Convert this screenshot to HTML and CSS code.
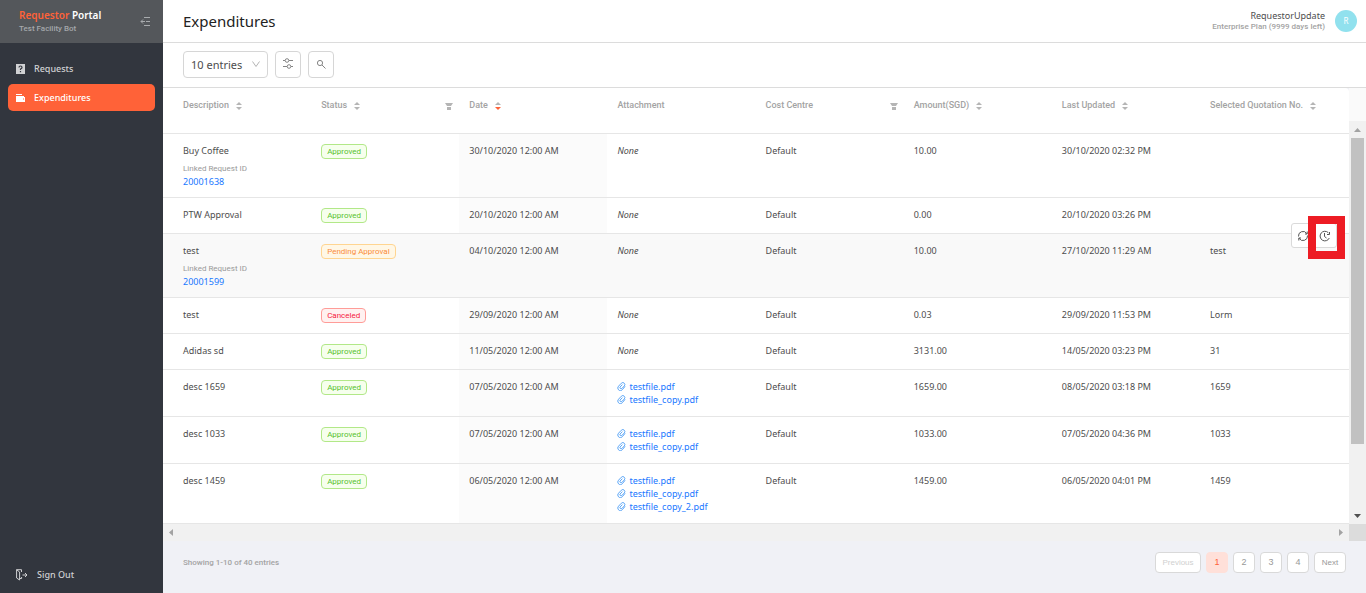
FILE: index.html
```html
<!DOCTYPE html>
<html lang="en">
<head>
<meta charset="utf-8">
<title>Expenditures</title>
<link rel="stylesheet" href="styles.css">
</head>
<body>
<svg class="defs" aria-hidden="true">
  <symbol id="sort" viewBox="0 0 6 10"><path fill="#b5b5b5" d="M3 1 6 4H0z"/><path d="M0 6h6L3 9z"/></symbol>
  <symbol id="filter" viewBox="0 0 8 8"><path d="M0 1h8L6 4H2zM2 5h4v3H2z"/></symbol>
  <symbol id="clip" viewBox="0 0 10 10"><path d="M9 4.800 6 8.500a2.800 2.800 0 0 1-4.300.200 2.900 2.900 0 0 1 0-4L4.800 1.400a2.200 2.200 0 0 1 3.300 0 2.200 2.200 0 0 1 0 3L5.400 7.200a1.300 1.300 0 0 1-2-1.600l2.600-2.700" fill="none" stroke="currentColor" stroke-width="1"/></symbol>
</svg>
<div class="app">
  <aside class="sidebar">
    <div class="brand">
      <div>
        <div class="brand-name"><span class="accent">Requestor</span> Portal</div>
        <div class="brand-sub">Test Facility Bot</div>
      </div>
      <button class="collapse" aria-label="Collapse menu">
        <svg width="10" height="10" viewBox="0 0 10 10" fill="none" stroke="currentColor"><path d="M4 .500h6M5 4.500H1M4 8.500h6M6 4.500h4M3 2.500l-2 2 2 2"/></svg>
      </button>
    </div>
    <nav class="nav">
      <a href="#" class="nav-item">
        <svg width="10" height="10" viewBox="0 0 10 10"><path d="M0 0h9v10H0z" fill="#d0d1d3"/><path d="M3 3.500Q3 2 4.500 2T6 3.500Q6 4.500 4.500 5v1M4.500 7v1.200" fill="none" stroke="#32363e" stroke-width="1.200"/></svg>
        Requests</a>
      <a href="#" class="nav-item active">
        <svg width="10" height="10" viewBox="0 0 10 10"><path fill-rule="evenodd" d="M0 1h6v1H0zM0 3h8v1h1v5H0zM7 5.500v1h1v-1z" fill="#fff"/></svg>
        Expenditures</a>
    </nav>
    <a href="#" class="signout">
      <svg width="12" height="12" viewBox="0 0 12 12" fill="none" stroke="currentColor"><path d="M5.500 3V.7H.600v8.300l3 2V3L.600.700M3.600 9.500h2V8M6.500 6H11M9 4l2 2-2 2"/></svg>
      Sign Out</a>
  </aside>
  <main class="main">
    <header class="topbar">
      <h1>Expenditures</h1>
      <div class="user">
        <div class="user-text">
          <div class="user-name">RequestorUpdate</div>
          <div class="user-plan">Enterprise Plan (9999 days left)</div>
        </div>
        <div class="avatar">R</div>
      </div>
    </header>
    <div class="toolbar">
      <div class="select-wrap">
        <select aria-label="Entries per page"><option>10 entries</option></select>
        <svg width="8" height="8" viewBox="0 0 8 8" fill="none" stroke="#b4b4b4"><path d="m.5 1.500 3.500 5 3.500-5"/></svg>
      </div>
      <button class="tool" aria-label="Column settings">
        <svg width="12" height="12" viewBox="0 0 12 12" fill="none" stroke="currentColor"><path d="M1 2.500h2M7 2.500h4M1 8.500h4M9 8.500h2"/><circle cx="5" cy="2.500" r="1.800"/><circle cx="7" cy="8.500" r="1.800"/></svg>
      </button>
      <button class="tool" aria-label="Search">
        <svg width="10" height="10" viewBox="0 0 10 10" fill="none" stroke="currentColor"><circle cx="4" cy="4" r="2.600"/><path d="m6 6 3.500 3.500"/></svg>
      </button>
    </div>
    <div class="grid">
      <table>
        <colgroup><col span="7"><col class="col-last"></colgroup>
        <thead>
          <tr>
            <th><div class="head">Description <svg class="sort"><use href="#sort"/></svg></div></th>
            <th><div class="head">Status <svg class="sort"><use href="#sort"/></svg><svg class="filter"><use href="#filter"/></svg></div></th>
            <th><div class="head">Date <svg class="sort desc"><use href="#sort"/></svg></div></th>
            <th><div class="head">Attachment</div></th>
            <th><div class="head">Cost Centre <svg class="filter"><use href="#filter"/></svg></div></th>
            <th><div class="head">Amount(SGD) <svg class="sort"><use href="#sort"/></svg></div></th>
            <th><div class="head">Last Updated <svg class="sort"><use href="#sort"/></svg></div></th>
            <th><div class="head">Selected Quotation No. <svg class="sort"><use href="#sort"/></svg></div></th>
          </tr>
        </thead>
        <tbody>
          <tr><td class="has-link">Buy Coffee<div class="linked">Linked Request ID</div><a href="#">20001638</a></td><td><span class="tag ok">Approved</span></td><td class="date">30/10/2020 12:00 AM</td><td><em>None</em></td><td>Default</td><td>10.00</td><td>30/10/2020 02:32 PM</td><td></td></tr>
          <tr><td>PTW Approval</td><td><span class="tag ok">Approved</span></td><td class="date">20/10/2020 12:00 AM</td><td><em>None</em></td><td>Default</td><td>0.00</td><td>20/10/2020 03:26 PM</td><td></td></tr>
          <tr class="hover"><td class="has-link">test<div class="linked">Linked Request ID</div><a href="#">20001599</a></td><td><span class="tag wait">Pending Approval</span></td><td class="date">04/10/2020 12:00 AM</td><td><em>None</em></td><td>Default</td><td>10.00</td><td>27/10/2020 11:29 AM</td><td class="last">test
            <div class="actions">
              <button aria-label="Refresh"><svg width="12" height="12" viewBox="0 0 12 12" fill="none" stroke="currentColor"><path d="M1.500 6.500A4.500 4.500 0 0 1 9.800 3.600M10.500 5.500a4.500 4.500 0 0 1-8.300 2.900M10.200 1.500v2.500H8M1.800 10.500V8H4"/></svg></button>
              <button aria-label="History"><svg width="12" height="12" viewBox="0 0 12 12" fill="none" stroke="currentColor"><path d="M9.300 2.700A4.800 4.800 0 1 0 10.300 8M10.500 2v2.500H8M5.500 3v3.500L7.500 8"/></svg></button>
            </div>
            <div class="marker"></div></td></tr>
          <tr><td>test</td><td><span class="tag bad">Canceled</span></td><td class="date">29/09/2020 12:00 AM</td><td><em>None</em></td><td>Default</td><td>0.03</td><td>29/09/2020 11:53 PM</td><td>Lorm</td></tr>
          <tr><td>Adidas sd</td><td><span class="tag ok">Approved</span></td><td class="date">11/05/2020 12:00 AM</td><td><em>None</em></td><td>Default</td><td>3131.00</td><td>14/05/2020 03:23 PM</td><td>31</td></tr>
          <tr><td>desc 1659</td><td><span class="tag ok">Approved</span></td><td class="date">07/05/2020 12:00 AM</td><td><a class="file" href="#"><svg><use href="#clip"/></svg>testfile.pdf</a><a class="file" href="#"><svg><use href="#clip"/></svg>testfile_copy.pdf</a></td><td>Default</td><td>1659.00</td><td>08/05/2020 03:18 PM</td><td>1659</td></tr>
          <tr><td>desc 1033</td><td><span class="tag ok">Approved</span></td><td class="date">07/05/2020 12:00 AM</td><td><a class="file" href="#"><svg><use href="#clip"/></svg>testfile.pdf</a><a class="file" href="#"><svg><use href="#clip"/></svg>testfile_copy.pdf</a></td><td>Default</td><td>1033.00</td><td>07/05/2020 04:36 PM</td><td>1033</td></tr>
          <tr><td>desc 1459</td><td><span class="tag ok">Approved</span></td><td class="date">06/05/2020 12:00 AM</td><td><a class="file" href="#"><svg><use href="#clip"/></svg>testfile.pdf</a><a class="file" href="#"><svg><use href="#clip"/></svg>testfile_copy.pdf</a><a class="file" href="#"><svg><use href="#clip"/></svg>testfile_copy_2.pdf</a></td><td>Default</td><td>1459.00</td><td>06/05/2020 04:01 PM</td><td>1459</td></tr>
        </tbody>
      </table>
      <div class="vscroll">
        <div class="vtrack">
          <svg width="7" height="4" viewBox="0 0 7 4"><path d="M0 4h7L3.500 0z" fill="#a3a3a3"/></svg>
          <div class="vthumb"></div>
          <div class="vspace"></div>
          <svg width="7" height="4" viewBox="0 0 7 4"><path d="M0 0h7L3.500 4z" fill="#505050"/></svg>
        </div>
      </div>
      <div class="hscroll">
        <svg width="4" height="7" viewBox="0 0 4 7"><path d="M4 0v7L0 3.500z" fill="#a3a3a3"/></svg>
        <svg width="4" height="7" viewBox="0 0 4 7"><path d="M0 0v7l4-3.500z" fill="#a3a3a3"/></svg>
      </div>
      <div class="corner"></div>
    </div>
    <footer class="footer">
      <div>Showing 1-10 of 40 entries</div>
      <div class="pages">
        <button class="prev" disabled>Previous</button>
        <button class="page current">1</button>
        <button class="page">2</button>
        <button class="page">3</button>
        <button class="page">4</button>
        <button class="next">Next</button>
      </div>
    </footer>
  </main>
</div>
</body>
</html>
```
FILE: styles.css
```css
* { box-sizing: border-box; }
body { margin: 0; font: 9px/13px "Noto Sans", sans-serif; color: #4d4d4d; background: #f0f1f6; }
a { color: #1a78ff; text-decoration: none; }
button, select { font: inherit; color: inherit; margin: 0; }
svg { display: block; flex: none; }
.defs { position: absolute; width: 0; height: 0; }
.app { display: flex; min-height: 100vh; }

.sidebar { width: 163px; flex: none; display: flex; flex-direction: column; background: #32363e; color: #d0d1d3; }
.brand { display: flex; justify-content: space-between; align-items: center; height: 43px; padding: 0 13px 0 19px; background: #54575b; }
.brand-name { font: 600 10px/14px "Noto Sans", sans-serif; color: #fff; }
.accent { color: #ff6238; }
.brand-sub { font: 500 8px/13px Roboto, sans-serif; color: #a5a8ab; }
.collapse { border: 0; padding: 0; background: none; color: #a8abae; }
.nav { display: flex; flex-direction: column; gap: 2px; padding: 12px 8px; }
.nav-item { display: flex; align-items: center; gap: 8px; height: 27px; padding: 0 8px; border-radius: 5px; color: #d0d1d3; font-weight: 500; }
.nav-item.active { background: #ff6238; color: #fff; }
.signout { display: flex; align-items: center; gap: 9px; margin-top: auto; padding: 12px 16px; color: #d0d1d3; font-weight: 500; }

.main { flex: 1; min-width: 0; display: flex; flex-direction: column; }
.topbar { display: flex; justify-content: space-between; align-items: center; height: 43px; padding: 0 9px 0 20px; background: #fff; border-bottom: 1px solid #dcdcdc; }
h1 { margin: 0; font-size: 15px; font-weight: 400; line-height: 20px; color: #222; }
.user { display: flex; align-items: center; gap: 10px; text-align: right; }
.user-name { line-height: 12px; }
.user-plan { font: 500 8px/10px Roboto, sans-serif; color: #a3a3a3; }
.avatar { width: 22px; height: 22px; border-radius: 50%; background: #91e1ee; color: #fff; font-size: 8px; line-height: 22px; text-align: center; }
.toolbar { display: flex; align-items: center; gap: 7px; height: 45px; padding: 0 20px 2px; background: #fff; border-bottom: 1px solid #dcdcdc; }
.select-wrap { display: grid; align-items: center; width: 85px; }
.select-wrap > * { grid-area: 1 / 1; }
.select-wrap svg { justify-self: end; margin-right: 8px; pointer-events: none; }
select { appearance: none; width: 100%; height: 27px; padding: 0 7px; border: 1px solid #d6d6d6; border-radius: 4px; background: #fff; font-size: 11px; }
.tool { display: flex; align-items: center; justify-content: center; width: 26px; height: 27px; padding: 0; border: 1px solid #d6d6d6; border-radius: 4px; background: #fff; color: #858585; }

.grid { display: grid; grid-template-columns: 1fr 17px; }
table { width: 100%; table-layout: fixed; border-collapse: separate; border-spacing: 0; background: #fff; border-top-right-radius: 4px; }
.col-last { width: 149px; }
th { height: 46px; padding: 11px 10px 10px; text-align: left; vertical-align: top; font: 500 9px/13px Roboto, sans-serif; color: #a3a3a3; border-bottom: 1px solid #e6e6e6; white-space: nowrap; }
td { padding: 10px; vertical-align: top; border-bottom: 1px solid #e6e6e6; }
th:first-child, td:first-child { padding-left: 20px; }
.head { display: flex; align-items: center; }
.sort { width: 6px; height: 10px; margin-left: 7px; fill: #b5b5b5; }
.sort.desc { fill: #ff6238; }
.filter { width: 8px; height: 8px; margin-left: auto; margin-right: -4px; fill: #b5b5b5; }
.date { background: #fbfbfb; }
.hover td { background: #f9f9f9; }
td.has-link { padding-bottom: 9px; }
.linked { margin-top: 6px; font: 400 8px/12px Roboto, sans-serif; color: #999; }
td a { display: block; }
td .file { display: flex; align-items: center; gap: 3px; }
.file svg { width: 9px; height: 9px; color: #4a9cf5; }
.tag { display: block; width: fit-content; height: 15px; padding: 0 5px; border: 1px solid; border-radius: 4px; font: 400 8px/14px Roboto, sans-serif; white-space: nowrap; }
.ok { color: #56c22d; background: #f6ffed; border-color: #b2e888; }
.wait { color: #fa8c3c; background: #fff7e6; border-color: #ffd591; }
.bad { color: #f5223d; background: #fff1f0; border-color: #ff9c98; }
.last { position: relative; }
.actions { position: absolute; top: -11px; right: 12px; display: flex; height: 25px; border: 1px solid #dadada; border-radius: 3px; background: #fff; }
.actions button { display: flex; align-items: center; justify-content: center; width: 22px; padding: 0; border: 0; background: none; color: #555; }
.marker { position: absolute; top: -18px; right: 4px; width: 37px; height: 43px; border: 8px solid #ed1c24; pointer-events: none; }

.vscroll { display: flex; padding-top: 33px; background: #fafafa; }
.vtrack { flex: 1; display: flex; flex-direction: column; align-items: center; padding: 7px 2px 6px; background: #f1f1f1; }
.vthumb { flex: 305; width: 100%; margin-top: 6px; background: #c1c1c1; }
.vspace { flex: 70; }
.hscroll { display: flex; align-items: center; justify-content: space-between; height: 17px; padding: 0 6px; background: #f1f1f1; }
.corner { background: #dcdcdc; }

.footer { display: flex; align-items: center; justify-content: space-between; padding: 11px 20px; font: 500 8px/13px Roboto, sans-serif; color: #a3a3a3; }
.pages { display: flex; gap: 5px; }
.pages button { height: 21px; min-width: 22px; padding: 0; border: 1px solid #d9d9d9; border-radius: 4px; background: #fff; color: #999; font: 400 8px/13px "Liberation Sans", sans-serif; }
.pages button.page { font-size: 9px; }
.pages button.current { border-color: #ffe0d9; background: #ffe0d9; color: #ff6238; }
.pages button.prev { width: 46px; color: #d0d0d0; }
.pages button.next { width: 32px; }
```
